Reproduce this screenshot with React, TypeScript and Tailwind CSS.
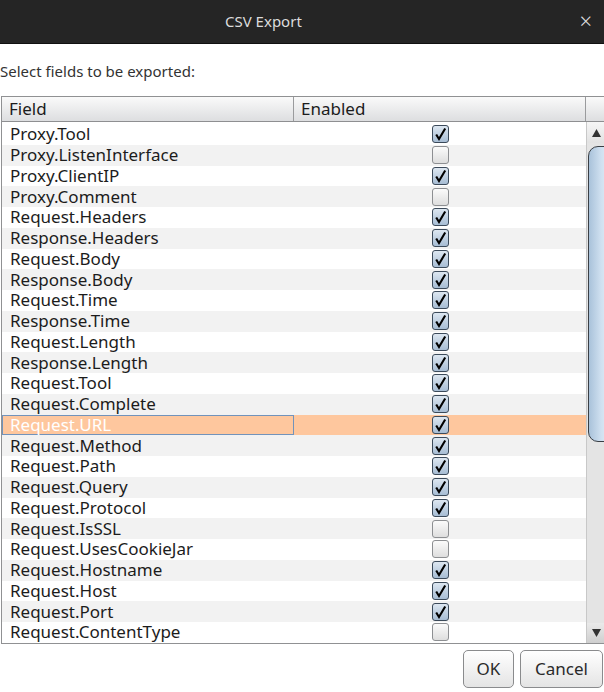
import React from 'react';

const fields: [string, boolean][] = [
  ['Proxy.Tool', true],
  ['Proxy.ListenInterface', false],
  ['Proxy.ClientIP', true],
  ['Proxy.Comment', false],
  ['Request.Headers', true],
  ['Response.Headers', true],
  ['Request.Body', true],
  ['Response.Body', true],
  ['Request.Time', true],
  ['Response.Time', true],
  ['Request.Length', true],
  ['Response.Length', true],
  ['Request.Tool', true],
  ['Request.Complete', true],
  ['Request.URL', true],
  ['Request.Method', true],
  ['Request.Path', true],
  ['Request.Query', true],
  ['Request.Protocol', true],
  ['Request.IsSSL', false],
  ['Request.UsesCookieJar', false],
  ['Request.Hostname', true],
  ['Request.Host', true],
  ['Request.Port', true],
  ['Request.ContentType', false],
];

const SELECTED = 14;

const Checkbox = ({ checked }: { checked: boolean }) =>
  checked ? (
    <div className="w-[17px] h-[18px] rounded-[3px] border border-[#3b4a5a] bg-gradient-to-b from-[#dde7f1] to-[#a7bdd4] flex items-center justify-center">
      <svg width="13" height="14" viewBox="0 0 13 14">
        <path d="M2.2 7.5 L5 12 L11.2 1.5" fill="none" stroke="#000" strokeWidth="2.1" strokeLinejoin="miter" />
      </svg>
    </div>
  ) : (
    <div className="w-[17px] h-[18px] rounded-[3px] border border-[#8d8f92] bg-gradient-to-b from-[#fbfbfb] to-[#dedede]"></div>
  );

export default function App() {
  return (
    <div
      className="w-[604px] h-[692px] bg-white flex flex-col overflow-hidden text-[#1c1c1c]"
      style={{ fontFamily: '"Noto Sans", "DejaVu Sans", sans-serif' }}
    >
      {/* title bar */}
      <div className="relative h-[44px] shrink-0 bg-[#252525] border-b border-[#111] flex items-center pl-[225px]">
        <span className="text-[#dcdcdc] text-[15px]">CSV Export</span>
        <span className="absolute right-[12px] top-[9px] text-[#dcdcdc] text-[22px] font-light leading-none">×</span>
      </div>

      <div className="mt-[17px] h-[20px] text-[15px] leading-[20px] text-[#333]">Select fields to be exported:</div>

      {/* table */}
      <div className="mt-[15px] ml-[1px] w-[612px] h-[548px] border border-[#909193] flex flex-col">
        <div className="h-[25px] shrink-0 flex bg-gradient-to-b from-[#fafafa] to-[#dddee0] border-b border-[#8e8f91] text-[17px] leading-[23px]">
          <div className="w-[292px] pl-[7px] border-r border-[#9a9b9d]">Field</div>
          <div className="w-[292px] pl-[7px] border-r border-[#9a9b9d]">Enabled</div>
          <div className="flex-1"></div>
        </div>

        <div className="flex-1 flex min-h-0">
          <div className="w-[584px] flex flex-col pt-[2px]">
            {fields.map(([name, on], i) => {
              const sel = i === SELECTED;
              const bg = sel ? 'bg-[#fec79e]' : i % 2 === 1 ? 'bg-[#f2f2f2]' : 'bg-white';
              return (
                <div key={name} className={`h-[20.75px] flex items-center ${bg}`}>
                  <div
                    className={`w-[292px] h-full pl-[7px] text-[17px] leading-[18px] flex items-center ${
                      sel ? 'text-white border border-[#7293bb]' : 'border border-transparent'
                    }`}
                  >
                    {name}
                  </div>
                  <div className="w-[292px] h-full flex items-center justify-center">
                    <Checkbox checked={on} />
                  </div>
                </div>
              );
            })}
          </div>

          {/* scrollbar */}
          <div className="w-[19px] border-l border-[#c8c8c8] bg-[#e4e4e4] flex flex-col">
            <div className="h-[21px] shrink-0 bg-gradient-to-b from-[#f6f6f6] to-[#e2e2e2] flex items-center justify-center">
              <svg width="9" height="8" viewBox="0 0 9 8">
                <path d="M4.5 0 L9 8 L0 8 Z" fill="#333" />
              </svg>
            </div>
            <div className="mt-[3px] h-[296px] w-[26px] ml-[1px] rounded-[10px] border border-[#3a3f45] bg-gradient-to-r from-[#a9c2da] via-[#cfe0f0] to-[#e9f2fa] shrink-0"></div>
            <div className="flex-1"></div>
            <div className="h-[20px] shrink-0 bg-gradient-to-b from-[#eaeaea] to-[#cfcfcf] flex items-center justify-center">
              <svg width="9" height="8" viewBox="0 0 9 8">
                <path d="M0 0 L9 0 L4.5 8 Z" fill="#333" />
              </svg>
            </div>
          </div>
        </div>
      </div>

      {/* buttons */}
      <div className="mt-[6px] flex justify-end gap-[6px] pr-[1px]">
        <button className="w-[51px] h-[38px] rounded-[5px] border border-[#8a8b8d] bg-gradient-to-b from-white to-[#e4e4e4] text-[17px] text-[#2a2a2a]">
          OK
        </button>
        <button className="w-[83px] h-[38px] rounded-[5px] border border-[#8a8b8d] bg-gradient-to-b from-white to-[#e4e4e4] text-[17px] text-[#2a2a2a]">
          Cancel
        </button>
      </div>
    </div>
  );
}
